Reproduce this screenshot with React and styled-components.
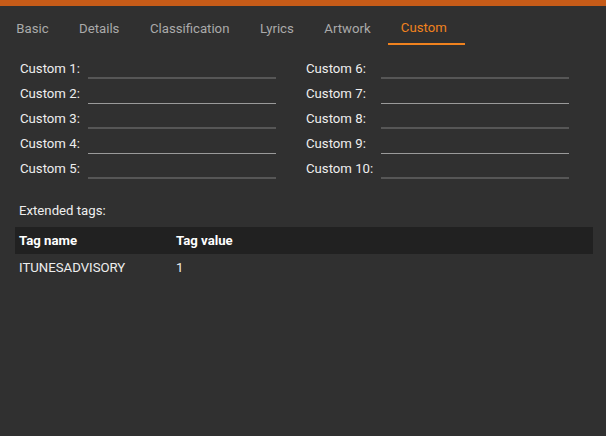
import React from 'react';
import styled, { createGlobalStyle } from 'styled-components';

const GlobalStyle = createGlobalStyle`
  html, body {
    margin: 0;
    padding: 0;
    background-color: #303030;
  }
  body {
    font-family: Roboto, 'Liberation Sans', sans-serif;
    font-size: 13.2px;
    color: #eeeeee;
  }
`;

const Page = styled.div`
  width: 606px;
  height: 436px;
  background-color: #303030;
  overflow: hidden;
`;

const TopBar = styled.div`
  height: 6px;
  background-color: #c65b18;
`;

const TabBar = styled.div`
  display: flex;
  padding-left: 1px;
`;

const Tab = styled.div`
  padding: ${(p) => (p.$active ? '14px 18px 7px 13px' : '15px 15.25px 6px')};
  margin-left: ${(p) => (p.$active ? '2px' : '0')};
  line-height: 16px;
  color: ${(p) => (p.$active ? '#f0821e' : '#aaaaaa')};
  border-bottom: 2px solid ${(p) => (p.$active ? '#f0821e' : 'transparent')};
  white-space: nowrap;
`;

const Fields = styled.div`
  display: grid;
  grid-template-columns: 286px 286px;
  padding: 13px 0 0 20px;
`;

const FieldColumn = styled.div`
  display: grid;
  grid-template-columns: auto 188px;
  justify-content: start;
  column-gap: 8px;
  align-content: start;
`;

const FieldLabel = styled.div`
  height: 25px;
  line-height: 22px;
  white-space: nowrap;
`;

const FieldInput = styled.div`
  height: ${(p) => (p.$light ? '20px' : '19px')};
  border-bottom: ${(p) => (p.$light ? '1px solid #9a9a9a' : '2px solid #565656')};
`;

const Section = styled.div`
  padding: 20px 13px 0 15px;
`;

const SectionTitle = styled.div`
  padding-left: 4px;
  line-height: 16px;
  margin-bottom: 8px;
`;

const Table = styled.div`
  display: flex;
  flex-direction: column;
`;

const TableRow = styled.div`
  display: grid;
  grid-template-columns: 157px 1fr;
  height: 27px;
  align-items: center;
  padding-left: 4px;
  background-color: ${(p) => (p.$header ? '#212121' : 'transparent')};
  font-weight: ${(p) => (p.$header ? 700 : 400)};
  color: ${(p) => (p.$header ? '#ffffff' : '#eeeeee')};
`;

const tabs = ['Basic', 'Details', 'Classification', 'Lyrics', 'Artwork', 'Custom'];

const Column = ({ from }) => (
  <FieldColumn>
    {[0, 1, 2, 3, 4].map((i) => (
      <React.Fragment key={i}>
        <FieldLabel>Custom {from + i}:</FieldLabel>
        <FieldInput $light={i % 2 === 1} />
      </React.Fragment>
    ))}
  </FieldColumn>
);

const App = () => {
  return (
    <>
      <GlobalStyle />
      <Page>
        <TopBar />
        <TabBar>
          {tabs.map((t) => (
            <Tab key={t} $active={t === 'Custom'}>{t}</Tab>
          ))}
        </TabBar>
        <Fields>
          <Column from={1} />
          <Column from={6} />
        </Fields>
        <Section>
          <SectionTitle>Extended tags:</SectionTitle>
          <Table>
            <TableRow $header>
              <span>Tag name</span>
              <span>Tag value</span>
            </TableRow>
            <TableRow>
              <span>ITUNESADVISORY</span>
              <span>1</span>
            </TableRow>
          </Table>
        </Section>
      </Page>
    </>
  );
};

export default App;
